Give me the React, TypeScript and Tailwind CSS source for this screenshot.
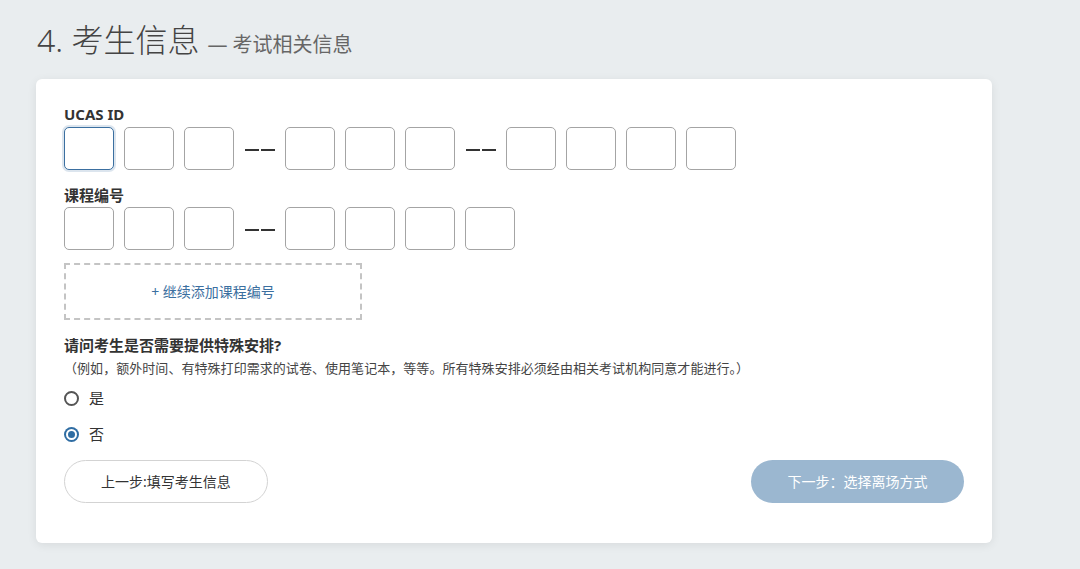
import { useState } from "react"

const font = { fontFamily: '"Noto Sans", "Noto Sans CJK SC", sans-serif' }

function Box({ active = false }: { active?: boolean }) {
    return (
        <input
            className={
                active
                    ? "w-[50px] h-[43px] rounded-[5px] border border-[#3b6fa0] shadow-[0_0_0_2px_rgba(59,111,160,0.18)] outline-none bg-white"
                    : "w-[50px] h-[43px] rounded-[5px] border border-[#a4a4a4] outline-none bg-white"
            }
        />
    )
}

function Dash() {
    return (
        <div className="w-[31px] flex items-center justify-center gap-[2px] mt-[2px]">
            <span className="w-[14px] h-[2px] bg-[#333]" />
            <span className="w-[14px] h-[2px] bg-[#333]" />
        </div>
    )
}

function Radio({ checked, label, onClick }: { checked: boolean; label: string; onClick: () => void }) {
    return (
        <label className="flex items-center gap-[10px] h-[22px] cursor-pointer" onClick={onClick}>
            {checked ? (
                <span className="w-[15px] h-[15px] rounded-full bg-[#2f6da3] flex items-center justify-center">
                    <span className="w-[11px] h-[11px] rounded-full border-2 border-white bg-[#2f6da3]" />
                </span>
            ) : (
                <span className="w-[15px] h-[15px] rounded-full border-2 border-[#555]" />
            )}
            <span className="text-[15px] text-[#333] leading-[22px]">{label}</span>
        </label>
    )
}

export default function App() {
    const [special, setSpecial] = useState(false)

    return (
        <div className="min-h-[569px] w-full bg-[#e9edef] pl-[36px] pt-[18px]" style={font}>
            {/* Heading */}
            <div className="flex items-baseline h-[44px] pl-[1px]">
                <span className="text-[32px] font-light text-[#444] leading-[44px]">4. 考生信息</span>
                <span className="text-[20px] text-[#666] ml-[8px]">— 考试相关信息</span>
            </div>

            {/* Card */}
            <div className="mt-[17px] w-[956px] h-[464px] bg-white rounded-[6px] shadow-[0_2px_10px_rgba(0,0,0,0.08)] px-[28px] pt-[25px]">
                <div className="text-[15px] font-bold text-[#333] leading-[20px]">UCAS ID</div>
                <div className="flex items-center gap-[10px] mt-[3px]">
                    <Box active />
                    <Box />
                    <Box />
                    <Dash />
                    <Box />
                    <Box />
                    <Box />
                    <Dash />
                    <Box />
                    <Box />
                    <Box />
                    <Box />
                </div>

                <div className="text-[15px] font-bold text-[#333] leading-[20px] mt-[15px]">课程编号</div>
                <div className="flex items-center gap-[10px] mt-[2px]">
                    <Box />
                    <Box />
                    <Box />
                    <Dash />
                    <Box />
                    <Box />
                    <Box />
                    <Box />
                </div>

                <button className="mt-[13px] w-[298px] h-[57px] border-2 border-dashed border-[#c4c4c4] flex items-center justify-center text-[14px] text-[#3b6fa0] bg-white">
                    + 继续添加课程编号
                </button>

                <div className="text-[15px] font-bold text-[#333] leading-[20px] mt-[15px]">请问考生是否需要提供特殊安排?</div>
                <div className="text-[13px] text-[#444] leading-[18px] mt-[4px] tracking-[0.05px]">
                    （例如，额外时间、有特殊打印需求的试卷、使用笔记本，等等。所有特殊安排必须经由相关考试机构同意才能进行。）
                </div>

                <div className="flex flex-col gap-[14px] mt-[10px]">
                    <Radio checked={special} label="是" onClick={() => setSpecial(true)} />
                    <Radio checked={!special} label="否" onClick={() => setSpecial(false)} />
                </div>

                <div className="flex items-center justify-between mt-[15px]">
                    <button className="w-[204px] h-[43px] rounded-full border border-[#d3d3d3] bg-white text-[14px] text-[#333]">
                        上一步:填写考生信息
                    </button>
                    <button className="w-[213px] h-[43px] rounded-full bg-[#9bb7d0] text-[14px] text-white">
                        下一步：选择离场方式
                    </button>
                </div>
            </div>
        </div>
    )
}
